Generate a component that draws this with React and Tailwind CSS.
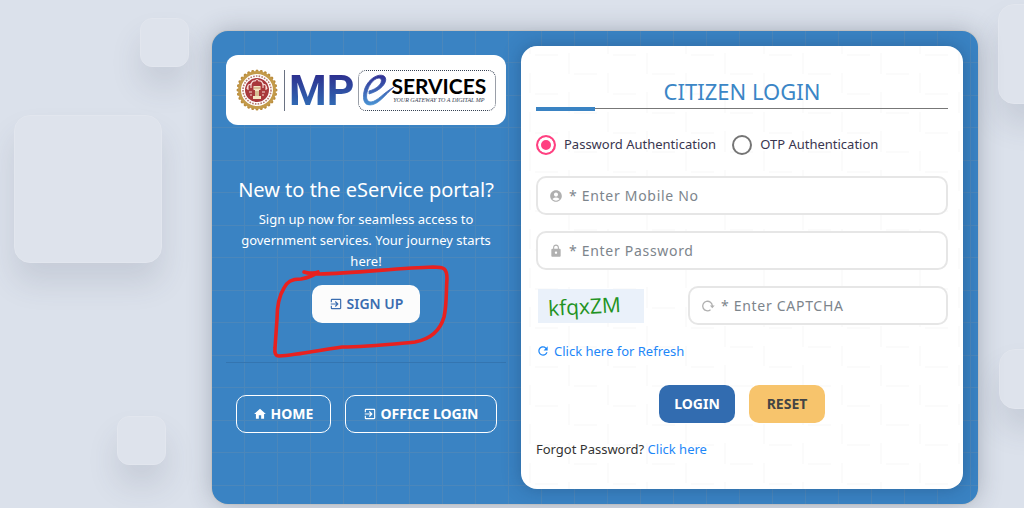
import { useState } from 'react';
import { MdAccountCircle, MdExitToApp, MdHome, MdLock, MdRefresh } from 'react-icons/md';
import clsx from 'clsx';

const tiles = [
  'left-[14px] top-[115px] w-[148px] h-[148px] rounded-2xl',
  'left-[140px] top-[18px] w-[49px] h-[49px] rounded-xl',
  'left-[117px] top-[416px] w-[49px] h-[49px] rounded-xl',
  '-right-[74px] top-[4px] w-[100px] h-[100px] rounded-2xl',
  '-right-[35px] top-[349px] w-[60px] h-[60px] rounded-2xl',
];

const teeth = Array.from({ length: 28 }, (_, i) => (i * 360) / 28);

function Emblem() {
  return (
    <svg viewBox="0 0 42 42" className="w-[42px] h-[42px] shrink-0" aria-hidden="true">
      {teeth.map((angle) => (
        <circle key={angle} cx="21" cy="2" r="1.5" fill="#b98a3a" transform={`rotate(${angle} 21 21)`} />
      ))}
      <circle cx="21" cy="21" r="17.5" fill="#fff" stroke="#c39a4a" strokeWidth="3" />
      <circle cx="21" cy="21" r="14" fill="none" stroke="#b77a70" strokeWidth="1.6" strokeDasharray="1.6 1.2" />
      <circle cx="21" cy="21" r="12" fill="#a8383b" />
      <path d="M11 20q1-6 4-4q1-5 4-4q2-3 4 0q3-1 4 4q3-2 4 4M12 17v4M15 14v5M27 14v5M30 17v4M13 23h3M26 23h3M14 26h2M26 26h2" fill="none" stroke="#f6dcd8" strokeWidth="1.1" />
      <path d="M17.500 17h7v4h-1.500v6h2v3h-8v-3h2v-6h-1.500z" fill="#f3e3c2" />
      <path d="M20 22v5M22 22v5M18 19h6" stroke="#a5763f" strokeWidth=".7" />
    </svg>
  );
}

function Logo() {
  return (
    <div className="flex h-[70px] items-center rounded-xl bg-white px-2.5">
      <Emblem />
      <span className="ml-1.5 h-[41px] w-px shrink-0 bg-gray-500" />
      <span className="ml-1 shrink-0 bg-linear-to-b from-[#2b1f86] to-[#3078bd] bg-clip-text font-[Roboto] text-[43px] leading-[46px] font-bold text-transparent">
        MP
      </span>
      <div className="ml-1 flex h-[41px] min-w-0 flex-1 items-center rounded-lg border border-dotted border-gray-700 pl-1">
        <svg viewBox="0 0 32 32" className="w-8 h-8 shrink-0" aria-hidden="true">
          <defs>
            <linearGradient id="swoosh" x1="0" y1="0" x2="0" y2="1">
              <stop offset="0" stopColor="#2f2f93" />
              <stop offset="1" stopColor="#4a94d4" />
            </linearGradient>
          </defs>
          <path
            d="M6 17C14 15 20 9 18 5C15 2 8 7 5 15C2 24 4 28 8 28C15 27 20 19 31 13C21 22 15 31 7 31C0 31-1 23 2 14C6 4 16-1 21 2C26 6 20 16 6 20Z"
            fill="url(#swoosh)"
            stroke="url(#swoosh)"
            strokeWidth=".8"
          />
        </svg>
        <div className="-ml-1 flex flex-col whitespace-nowrap">
          <span className="font-[Lato] text-[21px] leading-5 font-bold text-black">SERVICES</span>
          <span className="font-['Liberation_Serif'] text-[6px] leading-2 text-gray-700 italic">YOUR GATEWAY TO A DIGITAL MP</span>
        </div>
      </div>
    </div>
  );
}

function Scribble() {
  return (
    <svg viewBox="0 0 200 110" className="pointer-events-none absolute -top-[30px] -left-[52px] w-[200px] h-[110px] max-w-none" aria-hidden="true">
      <path
        d="M44 17C50 19 56 18 58 17C53 21 47 23 41 24C31 24 27 27 24 33C19 41 17 53 17 64L15 93Q14 101 19 101C38 100 60 95 82 92C105 92 133 89 155 87C171 84 180 76 184 62C187 49 186 35 187 24C187 13 184 12 173 12C140 13 95 18 59 19Q51 19 44 17"
        fill="none"
        stroke="#e8211f"
        strokeWidth="3.600"
        strokeLinecap="round"
        strokeLinejoin="round"
      />
    </svg>
  );
}

function RotateIcon({ className }) {
  return (
    <svg viewBox="0 0 14 14" className={className} fill="none" stroke="currentColor" aria-hidden="true">
      <path d="M9.500 10.800A4.800 4.800 0 1 1 11.300 7" strokeWidth="1.300" />
      <path d="M8.900 6.600h4.800l-2.400 2.600z" fill="currentColor" stroke="none" />
    </svg>
  );
}

function Weave() {
  return (
    <svg className="pointer-events-none absolute inset-0 w-full h-full rounded-2xl" aria-hidden="true">
      <defs>
        <pattern id="weave" width="78" height="39" patternUnits="userSpaceOnUse">
          <path d="M14 9h23M53 28h23M48 7v21M9 27v12M9 0v8" stroke="#fbfbfb" strokeWidth="2" />
        </pattern>
      </defs>
      <rect width="100%" height="100%" fill="url(#weave)" />
    </svg>
  );
}

function Field({ icon: Icon, label, className, ...props }) {
  return (
    <label className={clsx('flex h-[39px] items-center gap-1.5 rounded-[10px] border-2 border-[#e6e6e6] bg-white px-[11px]', className)}>
      <Icon className="w-3.5 h-3.5 shrink-0 text-[#b0b0b0]" />
      <input
        aria-label={label}
        placeholder={`* ${label}`}
        className="w-full min-w-0 bg-transparent text-sm tracking-wider text-gray-700 outline-none placeholder:text-[#7d858c]"
        {...props}
      />
    </label>
  );
}

function AuthOption({ label, value, checked, onChange }) {
  return (
    <label className="flex items-center gap-2 text-[#39364f]">
      <input
        type="radio"
        name="auth"
        value={value}
        checked={checked}
        onChange={onChange}
        className="w-5 h-5 shrink-0 appearance-none rounded-full border-2 border-[#757575] bg-white checked:border-[#ff4081] checked:bg-[#ff4081] checked:shadow-[inset_0_0_0_3px_white]"
      />
      {label}
    </label>
  );
}

export default function App() {
  const [auth, setAuth] = useState('password');

  return (
    <div className="relative min-h-screen overflow-hidden bg-[#dbe1eb] pt-[31px] pr-[46px] pb-1 pl-[212px] font-['Noto_Sans',sans-serif]">
      {tiles.map((tile) => (
        <div key={tile} className={clsx('absolute border border-[#e2e6ee] bg-[#dee3ec] shadow-[0_20px_30px_rgba(60,70,90,0.13)]', tile)} />
      ))}

      <main className="relative grid grid-cols-[minmax(0,280fr)_minmax(0,442fr)] gap-[15px] rounded-2xl bg-[#3a83c3] bg-[linear-gradient(to_right,transparent_32px,#4b87bb_32px),linear-gradient(transparent_31px,#4b87bb_31px,#4b87bb_32px,transparent_32px,transparent_64px,#4b87bb_64px)] bg-size-[33px_100%,100%_65px] p-[15px] pl-3.5 shadow-[0_0_24px_rgba(50,60,80,0.3),0_0_0_1px_#d9d9d9]">
        <section className="flex flex-col pt-[9px] text-center text-white">
          <Logo />
          <h2 className="mt-[51px] text-xl leading-7 whitespace-nowrap">New to the eService portal?</h2>
          <p className="mt-[5px] px-2 text-[13px] leading-[21px]">
            Sign up now for seamless access to government services. Your journey starts here!
          </p>
          <div className="relative mx-auto mt-[13px]">
            <button type="button" className="flex h-[38px] w-[108px] items-center justify-center gap-1 rounded-[10px] bg-[#fcfcfc] text-sm font-semibold text-[#3b6db0]">
              <MdExitToApp className="w-3.5 h-3.5" />
              SIGN UP
            </button>
            <Scribble />
          </div>
          <hr className="mt-[39px] border-[#3475b0]" />
          <div className="mt-8 flex justify-center gap-3.5">
            <button type="button" className="flex h-[38px] w-[95px] items-center justify-center gap-1 rounded-[10px] border border-white text-sm font-bold">
              <MdHome className="w-3.5 h-3.5" />
              HOME
            </button>
            <button type="button" className="flex h-[38px] w-[152px] items-center justify-center gap-1 rounded-[10px] border border-white text-sm font-bold whitespace-nowrap">
              <MdExitToApp className="w-3.5 h-3.5" />
              OFFICE LOGIN
            </button>
          </div>
        </section>

        <form
          className="relative rounded-2xl bg-white px-[15px] pt-[29px] pb-[30px] text-[13px] shadow-[0_0_18px_rgba(20,50,90,0.35)]"
          onSubmit={(e) => e.preventDefault()}
        >
          <Weave />
          <div className="relative">
            <h1 className="border-b border-[#777] text-center text-[22px] leading-[33px] text-[#3b86c6]">CITIZEN LOGIN</h1>
            <div className="-mt-0.5 h-1 w-[59px] bg-[#3a83c3]" />

            <div className="mt-6 flex items-center gap-4">
              <AuthOption label="Password Authentication" value="password" checked={auth === 'password'} onChange={() => setAuth('password')} />
              <AuthOption label="OTP Authentication" value="otp" checked={auth === 'otp'} onChange={() => setAuth('otp')} />
            </div>

            <Field icon={MdAccountCircle} label="Enter Mobile No" type="tel" className="mt-[21px]" />
            <Field icon={MdLock} label="Enter Password" type="password" className="mt-4" />

            <div className="mt-4 grid grid-cols-[152fr_260fr] items-center">
              <div className="ml-0.5 flex h-[34px] w-[106px] items-center bg-[#eaf1fa] pl-2.5">
                <span className="-rotate-3 font-['Open_Sans'] text-[21px] leading-6 font-medium text-[#229322]">kfqxZM</span>
              </div>
              <Field icon={RotateIcon} label="Enter CAPTCHA" type="text" />
            </div>

            <a href="#refresh" className="mt-4 flex w-fit items-center gap-1 leading-5 text-[#1e87f8]">
              <MdRefresh className="w-3.5 h-3.5" />
              Click here for Refresh
            </a>

            <div className="mt-6 flex justify-center gap-3.5 text-sm font-bold">
              <button type="submit" className="h-[38px] w-[76px] rounded-[10px] bg-[#326cb0] text-white">LOGIN</button>
              <button type="reset" className="h-[38px] w-[76px] rounded-[10px] bg-[#f7c46c] text-[#444]">RESET</button>
            </div>

            <p className="mt-4 leading-5 text-[#333]">
              Forgot Password? <a href="#forgot" className="text-[#1e87f8]">Click here</a>
            </p>
          </div>
        </form>
      </main>
    </div>
  );
}
